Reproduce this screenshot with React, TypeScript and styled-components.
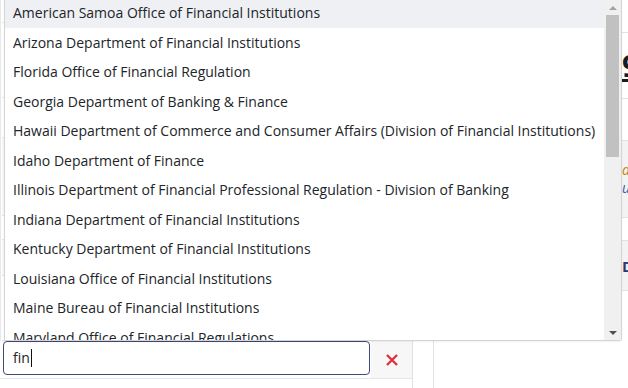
import React from "react"
import styled, { createGlobalStyle } from "styled-components"

const GlobalStyle = createGlobalStyle`
    html, body {
        margin: 0;
        padding: 0;
        background: #ffffff;
        font-family: "Open Sans", "Noto Sans", sans-serif;
        color: #212529;
    }
    * {
        box-sizing: border-box;
    }
`

const Page = styled.div`
    position: relative;
    display: flex;
    width: 628px;
    height: 388px;
    overflow: hidden;
`

const LeftPanel = styled.div`
    display: flex;
    flex-direction: column;
    flex-shrink: 0;
    width: 413px;
    border-right: 1px solid #e2e2e2;
`

const FillerList = styled.div`
    display: flex;
    flex-direction: column;
    height: 341px;
    padding-left: 1px;
    border-left: 1px solid #e8e8e8;
`

const FillerRow = styled.div<{ $h: number; $shade?: boolean }>`
    height: ${(p) => p.$h}px;
    border-bottom: 1px solid #e4e4e4;
    background: ${(p) => (p.$shade ? "#f6f6f6" : "transparent")};
`

const SearchRow = styled.div`
    display: flex;
    height: 38px;
    border-bottom: 1px solid #e6e6e6;
    padding-left: 3px;
`

const SearchInput = styled.div`
    display: flex;
    align-items: center;
    flex-shrink: 0;
    width: 367px;
    height: 34px;
    padding-left: 9px;
    border: 1px solid #3f4a78;
    border-radius: 4px;
    font-size: 14px;
    color: #212529;
`

const Typed = styled.span`
    padding-right: 1px;
    border-right: 1px solid #111111;
    line-height: 18px;
`

const ClearButton = styled.div`
    display: flex;
    align-items: center;
    justify-content: center;
    flex: 1;
    margin-left: 1px;
    background: #f7f7f7;
`

const Gutter = styled.div`
    flex-shrink: 0;
    width: 20px;
`

const MainPanel = styled.div`
    display: flex;
    flex-direction: column;
    flex: 1;
    min-width: 0;
    overflow: hidden;
    border-left: 1px solid #e2e2e2;
`

const MainRow = styled.div<{ $h: number; $shade?: boolean }>`
    display: flex;
    align-items: center;
    flex-shrink: 0;
    height: ${(p) => p.$h}px;
    padding-left: 12px;
    border-bottom: 1px solid #e2e2e2;
    background: ${(p) => (p.$shade ? "#f3f3f3" : "transparent")};
    white-space: nowrap;
`

const Heading = styled.div`
    font-size: 30px;
    font-weight: 700;
    color: #1b1b1b;
    padding-left: 176px;
    text-decoration: underline;
`

const Note = styled.div`
    display: flex;
    flex-direction: column;
    padding-left: 176px;
    font-size: 14px;
    font-style: italic;
    line-height: 18px;
    .a {
        color: #c7811c;
    }
    .b {
        color: #3060b0;
    }
`

const Label = styled.div`
    padding-left: 176px;
    font-size: 15px;
    font-weight: 700;
    color: #2b3a6e;
`

const Dropdown = styled.div`
    position: absolute;
    left: 4px;
    top: 0;
    display: flex;
    width: 618px;
    height: 341px;
    background: #ffffff;
    border: 1px solid #d4d4d4;
    border-top: none;
    border-radius: 0 0 3px 3px;
    box-shadow: 0 1px 2px rgba(0, 0, 0, 0.06);
    z-index: 10;
`

const Options = styled.div`
    flex: 1;
    overflow: hidden;
`

const OptionsInner = styled.div`
    margin-top: -2px;
`

const Option = styled.div<{ $active?: boolean }>`
    display: flex;
    align-items: center;
    height: 29.5px;
    padding-left: 8px;
    font-size: 14px;
    color: #212529;
    white-space: nowrap;
    background: ${(p) => (p.$active ? "#eff0f3" : "#ffffff")};
`

const Scrollbar = styled.div`
    display: flex;
    flex-direction: column;
    width: 17px;
    background: #f0f0f0;
`

const ArrowBox = styled.div`
    display: flex;
    align-items: center;
    justify-content: center;
    height: 15px;
`

const Arrow = styled.div<{ $down?: boolean }>`
    width: 0;
    height: 0;
    border-left: 4px solid transparent;
    border-right: 4px solid transparent;
    ${(p) =>
        p.$down
            ? "border-top: 4px solid #505050;"
            : "border-bottom: 4px solid #a3a3a3;"}
`

const Track = styled.div`
    flex: 1;
    padding: 0 2px;
`

const Thumb = styled.div`
    height: 142px;
    background: #c1c1c1;
`

const options = [
    "American Samoa Office of Financial Institutions",
    "Arizona Department of Financial Institutions",
    "Florida Office of Financial Regulation",
    "Georgia Department of Banking & Finance",
    "Hawaii Department of Commerce and Consumer Affairs (Division of Financial Institutions)",
    "Idaho Department of Finance",
    "Illinois Department of Financial Professional Regulation - Division of Banking",
    "Indiana Department of Financial Institutions",
    "Kentucky Department of Financial Institutions",
    "Louisiana Office of Financial Institutions",
    "Maine Bureau of Financial Institutions",
    "Maryland Office of Financial Regulations",
    "Massachusetts Division of Banks",
]

export default function App() {
    return (
        <Page>
            <GlobalStyle />
            <LeftPanel>
                <FillerList>
                    <FillerRow $h={23} />
                    <FillerRow $h={75} />
                    <FillerRow $h={40} />
                    <FillerRow $h={78} $shade />
                    <FillerRow $h={24} />
                    <FillerRow $h={36} $shade />
                    <FillerRow $h={65} />
                </FillerList>
                <SearchRow>
                    <SearchInput>
                        <Typed>fin</Typed>
                    </SearchInput>
                    <ClearButton>
                        <svg width="14" height="14" viewBox="0 0 14 14">
                            <path
                                d="M2 2 L12 12 M12 2 L2 12"
                                stroke="#d9343f"
                                strokeWidth="2.4"
                                strokeLinecap="butt"
                            />
                        </svg>
                    </ClearButton>
                </SearchRow>
            </LeftPanel>
            <Gutter />
            <MainPanel>
                <MainRow $h={33} />
                <MainRow $h={66}>
                    <Heading>9</Heading>
                </MainRow>
                <MainRow $h={42} />
                <MainRow $h={77} $shade>
                    <Note>
                        <span className="a">a</span>
                        <span className="b">u/</span>
                    </Note>
                </MainRow>
                <MainRow $h={23} />
                <MainRow $h={50} $shade>
                    <Label>D</Label>
                </MainRow>
            </MainPanel>

            <Dropdown>
                <Options>
                    <OptionsInner>
                        {options.map((o, i) => (
                            <Option key={o} $active={i === 0}>
                                {o}
                            </Option>
                        ))}
                    </OptionsInner>
                </Options>
                <Scrollbar>
                    <ArrowBox>
                        <Arrow />
                    </ArrowBox>
                    <Track>
                        <Thumb />
                    </Track>
                    <ArrowBox>
                        <Arrow $down />
                    </ArrowBox>
                </Scrollbar>
            </Dropdown>
        </Page>
    )
}
